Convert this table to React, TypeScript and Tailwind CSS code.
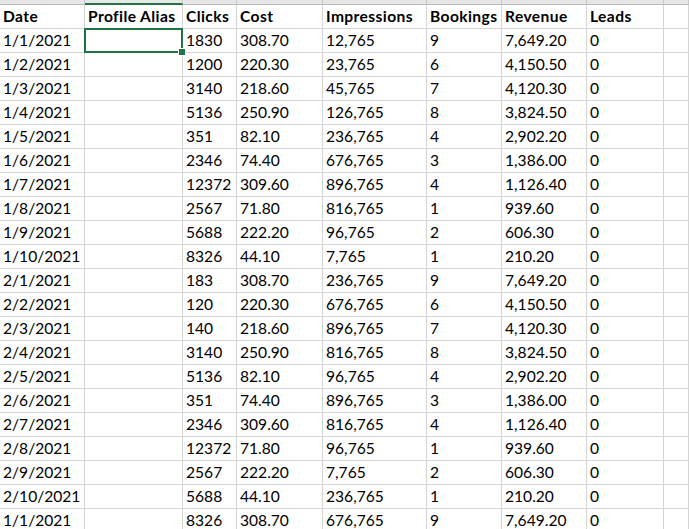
import React from "react";

const headers = ["Date", "Profile Alias", "Clicks", "Cost", "Impressions", "Bookings", "Revenue", "Leads", ""];

const rows: string[][] = [
  ["1/1/2021", "1830", "308.70", "12,765", "9", "7,649.20", "0"],
  ["1/2/2021", "1200", "220.30", "23,765", "6", "4,150.50", "0"],
  ["1/3/2021", "3140", "218.60", "45,765", "7", "4,120.30", "0"],
  ["1/4/2021", "5136", "250.90", "126,765", "8", "3,824.50", "0"],
  ["1/5/2021", "351", "82.10", "236,765", "4", "2,902.20", "0"],
  ["1/6/2021", "2346", "74.40", "676,765", "3", "1,386.00", "0"],
  ["1/7/2021", "12372", "309.60", "896,765", "4", "1,126.40", "0"],
  ["1/8/2021", "2567", "71.80", "816,765", "1", "939.60", "0"],
  ["1/9/2021", "5688", "222.20", "96,765", "2", "606.30", "0"],
  ["1/10/2021", "8326", "44.10", "7,765", "1", "210.20", "0"],
  ["2/1/2021", "183", "308.70", "236,765", "9", "7,649.20", "0"],
  ["2/2/2021", "120", "220.30", "676,765", "6", "4,150.50", "0"],
  ["2/3/2021", "140", "218.60", "896,765", "7", "4,120.30", "0"],
  ["2/4/2021", "3140", "250.90", "816,765", "8", "3,824.50", "0"],
  ["2/5/2021", "5136", "82.10", "96,765", "4", "2,902.20", "0"],
  ["2/6/2021", "351", "74.40", "896,765", "3", "1,386.00", "0"],
  ["2/7/2021", "2346", "309.60", "816,765", "4", "1,126.40", "0"],
  ["2/8/2021", "12372", "71.80", "96,765", "1", "939.60", "0"],
  ["2/9/2021", "2567", "222.20", "7,765", "2", "606.30", "0"],
  ["2/10/2021", "5688", "44.10", "236,765", "1", "210.20", "0"],
  ["1/1/2021", "8326", "308.70", "676,765", "9", "7,649.20", "0"],
];

const gridCols = "grid grid-cols-[85px_98px_54px_86px_104px_75px_85px_77px_1fr]";

export default function App() {
  return (
    <div
      className="w-[689px] h-[529px] overflow-hidden bg-white text-black text-[15.6px]"
      style={{ fontFamily: "Lato, 'Open Sans', sans-serif" }}
    >
      {/* column header strip (bottom edge) */}
      <div className={gridCols}>
        {headers.map((_, i) => (
          <div
            key={i}
            className={
              "h-[5px] bg-[#e6e6e6] border-r border-[#c8c8c8] " +
              (i === 1 ? "border-b-2 border-b-[#217346]" : "border-b border-b-[#b8b8b8]")
            }
          />
        ))}
      </div>
      {/* header row */}
      <div className={gridCols}>
        {headers.map((h, i) => (
          <div
            key={i}
            className="h-[24px] flex items-center pl-[3px] font-bold tracking-[0.4px] border-r border-b border-[#d4d4d4] whitespace-nowrap overflow-hidden"
          >
            {h}
          </div>
        ))}
      </div>
      {rows.map((r, ri) => {
        const cells = [r[0], "", ...r.slice(1), ""];
        return (
          <div key={ri} className={gridCols}>
            {cells.map((c, ci) => {
              const selected = ri === 0 && ci === 1;
              return (
                <div
                  key={ci}
                  className={
                    "h-[24px] flex items-center pl-[3px] border-r border-b border-[#d4d4d4] whitespace-nowrap" +
                    (selected ? " relative z-10" : "")
                  }
                >
                  {c}
                  {selected && (
                    <div className="absolute left-[-1px] top-[-1px] right-[-1px] bottom-[-1px] border-2 border-[#217346]">
                      <div className="absolute right-[-4px] bottom-[-4px] w-[6px] h-[6px] bg-[#217346] shadow-[0_0_0_1px_#ffffff]" />
                    </div>
                  )}
                </div>
              );
            })}
          </div>
        );
      })}
    </div>
  );
}
